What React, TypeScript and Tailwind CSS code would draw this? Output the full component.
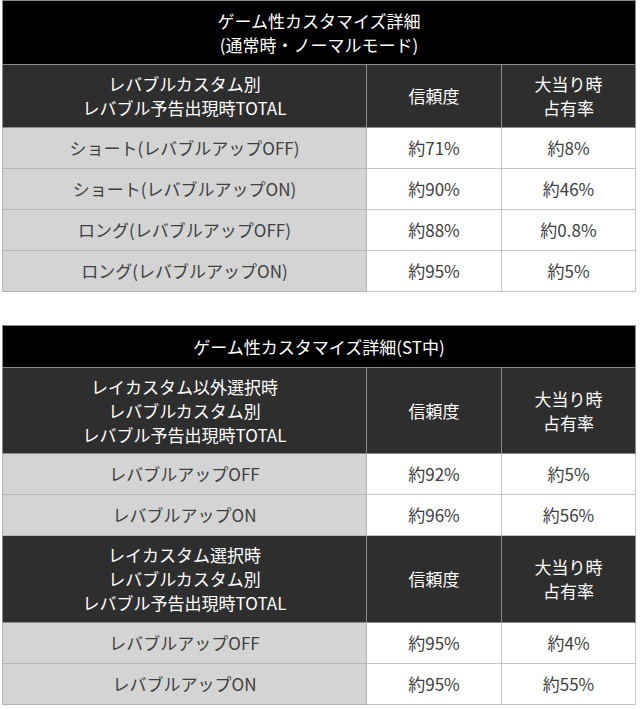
const FONT = { fontFamily: '"Noto Sans CJK JP", "Noto Sans", sans-serif' };

type Row = { label: string; rate: string; share: string };

const NORMAL: Row[] = [
  { label: "ショート(レバブルアップOFF)", rate: "約71%", share: "約8%" },
  { label: "ショート(レバブルアップON)", rate: "約90%", share: "約46%" },
  { label: "ロング(レバブルアップOFF)", rate: "約88%", share: "約0.8%" },
  { label: "ロング(レバブルアップON)", rate: "約95%", share: "約5%" },
];

const ST_OTHER: Row[] = [
  { label: "レバブルアップOFF", rate: "約92%", share: "約5%" },
  { label: "レバブルアップON", rate: "約96%", share: "約56%" },
];

const ST_REI: Row[] = [
  { label: "レバブルアップOFF", rate: "約95%", share: "約4%" },
  { label: "レバブルアップON", rate: "約95%", share: "約55%" },
];

function Head({ lines, h }: { lines: string[]; h: string }) {
  return (
    <tr className={`${h} bg-[#2e2e2e] text-white`}>
      <th className="border border-[#8a8a8a] font-normal leading-[24px]">
        {lines.map((l) => (
          <div key={l}>{l}</div>
        ))}
      </th>
      <th className="border border-[#8a8a8a] font-normal">信頼度</th>
      <th className="border border-[#8a8a8a] font-normal leading-[24px]">
        <div>大当り時</div>
        <div>占有率</div>
      </th>
    </tr>
  );
}

function Body({ rows }: { rows: Row[] }) {
  return (
    <>
      {rows.map((r) => (
        <tr key={r.label + r.rate + r.share} className="h-[41px] text-[#404040]">
          <td className="border border-[#b4b4b4] bg-[#d4d4d4]">{r.label}</td>
          <td className="border border-[#c4c4c4] bg-white">{r.rate}</td>
          <td className="border border-[#c4c4c4] bg-white">{r.share}</td>
        </tr>
      ))}
    </>
  );
}

function Table({ title, children }: { title: string[]; children: React.ReactNode }) {
  return (
    <table className="w-full table-fixed border-collapse border border-[#a8a8a8] text-center text-[17px]">
      <colgroup>
        <col className="w-[364px]" />
        <col className="w-[135px]" />
        <col />
      </colgroup>
      <tbody>
        <tr className={`${title.length > 1 ? "h-[64px]" : "h-[42px]"} bg-black text-white`}>
          <th colSpan={3} className="border border-[#8a8a8a] font-normal leading-[24px]">
            {title.map((t) => (
              <div key={t}>{t}</div>
            ))}
          </th>
        </tr>
        {children}
      </tbody>
    </table>
  );
}

export default function App() {
  return (
    <div className="min-h-[709px] w-[640px] bg-white px-[2px] pr-[4px]" style={FONT}>
      <Table title={["ゲーム性カスタマイズ詳細", "(通常時・ノーマルモード)"]}>
        <Head lines={["レバブルカスタム別", "レバブル予告出現時TOTAL"]} h="h-[63px]" />
        <Body rows={NORMAL} />
      </Table>

      <div className="mt-[33px]">
        <Table title={["ゲーム性カスタマイズ詳細(ST中)"]}>
          <Head lines={["レイカスタム以外選択時", "レバブルカスタム別", "レバブル予告出現時TOTAL"]} h="h-[86px]" />
          <Body rows={ST_OTHER} />
          <Head lines={["レイカスタム選択時", "レバブルカスタム別", "レバブル予告出現時TOTAL"]} h="h-[87px]" />
          <Body rows={ST_REI} />
        </Table>
      </div>
    </div>
  );
}
